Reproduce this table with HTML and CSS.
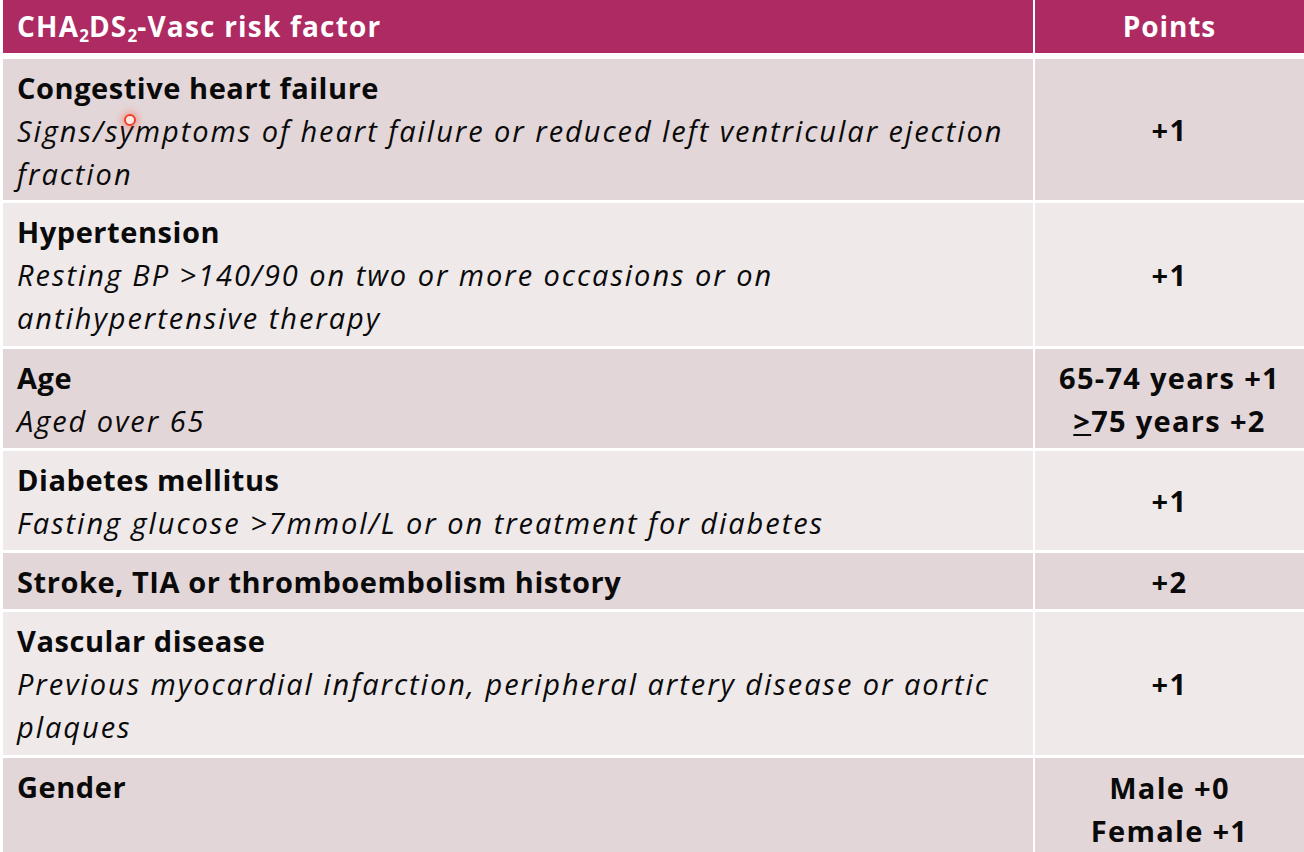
FILE: index.html
```html
<!DOCTYPE html>
<html lang="en">
<head>
<meta charset="utf-8">
<title>CHA2DS2-Vasc</title>
<link rel="stylesheet" href="styles.css">
</head>
<body>
<div class="table">
  <div class="row head">
    <div class="cell c1">CHA<sub>2</sub>DS<sub>2</sub>-Vasc risk factor</div>
    <div class="cell c2"><span>Points</span></div>
  </div>
  <div class="row dark r1">
    <div class="cell c1"><b>Congestive heart failure</b><i>Signs/symptoms of heart failure or reduced left ventricular ejection fraction</i><span class="dot"></span></div>
    <div class="cell c2"><span>+1</span></div>
  </div>
  <div class="row light h3">
    <div class="cell c1"><b>Hypertension</b><i>Resting BP &gt;140/90 on two or more occasions or on<br>antihypertensive therapy</i></div>
    <div class="cell c2"><span>+1</span></div>
  </div>
  <div class="row dark h2">
    <div class="cell c1"><b>Age</b><i>Aged over 65</i></div>
    <div class="cell c2"><span>65-74 years +1<br><u>&gt;</u>75 years +2</span></div>
  </div>
  <div class="row light h2">
    <div class="cell c1"><b>Diabetes mellitus</b><i>Fasting glucose &gt;7mmol/L or on treatment for diabetes</i></div>
    <div class="cell c2"><span>+1</span></div>
  </div>
  <div class="row dark h1">
    <div class="cell c1"><b>Stroke, TIA or thromboembolism history</b></div>
    <div class="cell c2"><span>+2</span></div>
  </div>
  <div class="row light h3">
    <div class="cell c1"><b>Vascular disease</b><i>Previous myocardial infarction, peripheral artery disease or aortic plaques</i></div>
    <div class="cell c2"><span>+1</span></div>
  </div>
  <div class="row dark last">
    <div class="cell c1"><b>Gender</b></div>
    <div class="cell c2 top"><span>Male +0<br>Female +1</span></div>
  </div>
</div>
</body>
</html>
```

FILE: styles.css
```css
html, body {
  margin: 0;
  padding: 0;
  background: #ffffff;
  overflow: hidden;
}
body {
  width: 1304px;
  height: 852px;
  font-family: "Open Sans", "DejaVu Sans", sans-serif;
  color: #0a0a0a;
}
.table {
  display: flex;
  flex-direction: column;
  gap: 3px;
  padding-left: 3px;
}
.row {
  display: grid;
  grid-template-columns: 1030px 1fr;
  column-gap: 2px;
}
.row.head {
  height: 53px;
  margin-bottom: 3px;
}
.row.head .cell {
  background: #ae2a62;
  color: #ffffff;
  font-weight: 700;
  font-size: 28px;
  line-height: 53px;
  padding-top: 0;
  padding-bottom: 0;
  letter-spacing: 1.2px;
}
.row.head sub {
  font-size: 17px;
  line-height: 0;
  vertical-align: -5px;
  letter-spacing: 0;
}
.row.head .c2 {
  letter-spacing: 0.9px;
}
.cell {
  font-size: 29px;
  line-height: 43px;
  box-sizing: border-box;
  position: relative;
}
.c1 {
  padding: 7px 10px 4px 14px;
}
.c1 b, .c1 i {
  display: block;
}
.c1 b {
  font-weight: 700;
  letter-spacing: 0.55px;
}
.c1 i {
  font-style: italic;
  letter-spacing: 1.95px;
}
.c2 {
  display: flex;
  align-items: center;
  justify-content: center;
  text-align: center;
  font-weight: 700;
  letter-spacing: 1.3px;
}
.c2.top {
  align-items: flex-start;
  padding-top: 8px;
}
.dark .cell { background: #e3d6d8; }
.light .cell { background: #efe9ea; }
.r1 { height: 141px; }
.h3 { height: 143px; }
.h2 { height: 99px; }
.h1 { height: 56px; }
.last { height: 100px; }
.dot {
  position: absolute;
  left: 121px;
  top: 55px;
  width: 8px;
  height: 8px;
  border-radius: 50%;
  border: 2px solid #f0402c;
  background: #ffe8e0;
  box-shadow: 0 0 6px 3px rgba(255, 80, 60, 0.35);
}
```
